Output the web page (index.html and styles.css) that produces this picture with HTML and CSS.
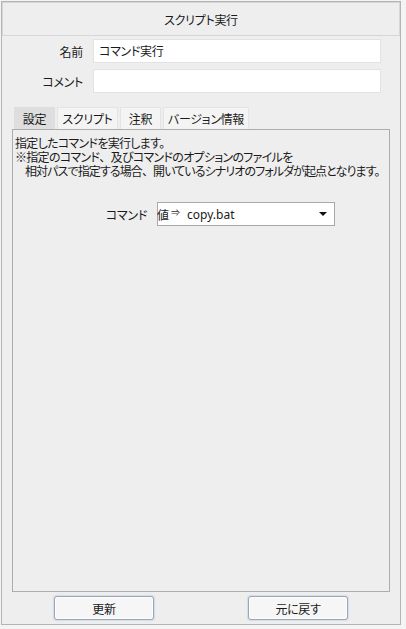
FILE: index.html
```html
<!DOCTYPE html>
<html lang="ja">
<head>
<meta charset="utf-8">
<title>スクリプト実行</title>
<link rel="stylesheet" href="styles.css">
</head>
<body>
<div class="window">
  <div class="header">スクリプト実行</div>
  <div class="form">
    <label class="form-label">名前</label>
    <div class="input">コマンド実行</div>
    <label class="form-label">コメント</label>
    <div class="input"></div>
  </div>
  <div class="tabs">
    <div class="tab tab-active">設定</div>
    <div class="tab">スクリプト</div>
    <div class="tab">注釈</div>
    <div class="tab">バージョン情報</div>
  </div>
  <div class="panel">
    <div class="desc">
      <div class="line">指定したコマンドを実行します。</div>
      <div class="line">※指定のコマンド<span class="comma">、</span>及びコマンドのオプションのファイルを</div>
      <div class="line indent tight">相対パスで指定する場合<span class="comma">、</span>開いているシナリオのフォルダが起点となります。</div>
    </div>
    <div class="combo-row">
      <span class="combo-label">コマンド</span>
      <div class="combo">
        <span class="combo-prefix">値<span class="arrow-glyph">⇒</span></span>
        <span class="combo-value">copy.bat</span>
        <span class="combo-arrow"></span>
      </div>
    </div>
  </div>
  <div class="buttons">
    <button class="btn">更新</button>
    <button class="btn">元に戻す</button>
  </div>
</div>
</body>
</html>
```
FILE: styles.css
```css
html, body {
  margin: 0;
  padding: 0;
  background: #f4f4f4;
}
body {
  font-family: "Noto Sans CJK JP", "Noto Sans", sans-serif;
  font-size: 12px;
  color: #1a1a1a;
  font-feature-settings: "palt";
}
.window {
  box-sizing: border-box;
  margin: 1px 0 0 1px;
  width: 400px;
  height: 624px;
  border: 1px solid #b4b4b4;
  background: #eeeeee;
  display: flex;
  flex-direction: column;
}
.header {
  box-sizing: border-box;
  height: 34px;
  border: 1px solid #d6d6d6;
  display: flex;
  align-items: center;
  justify-content: center;
  padding-top: 1px;
  letter-spacing: -0.3px;
}
.form {
  margin-top: 3px;
  display: grid;
  grid-template-columns: 81px 288px;
  column-gap: 10px;
  row-gap: 6px;
  align-items: center;
}
.form-label {
  text-align: right;
  letter-spacing: -0.3px;
}
.input {
  box-sizing: border-box;
  height: 24px;
  background: #ffffff;
  border: 1px solid #e2e2e2;
  padding: 0 5px;
  line-height: 21px;
  letter-spacing: -0.3px;
}
.tabs {
  margin-top: 14px;
  height: 22px;
  display: flex;
  gap: 2px;
  padding-left: 12px;
}
.tab {
  box-sizing: border-box;
  height: 22px;
  display: flex;
  align-items: center;
  justify-content: center;
  background: #f4f4f4;
  border: 1px solid #e4e4e4;
  border-bottom: none;
  letter-spacing: -0.3px;
}
.tab:nth-child(1) { width: 41px; }
.tab:nth-child(2) { width: 61px; }
.tab:nth-child(3) { width: 41px; }
.tab:nth-child(4) { width: 86px; }
.tab-active {
  background: #dedede;
  border-color: #dedede;
}
.panel {
  box-sizing: border-box;
  margin-left: 10px;
  width: 378px;
  height: 463px;
  border: 1px solid #adadad;
  background: #eeeeee;
}
.desc {
  padding: 6px 0 0 2px;
  white-space: nowrap;
  letter-spacing: -0.7px;
}
.line {
  height: 14px;
  line-height: 14px;
}
.tight {
  letter-spacing: -0.9px;
}
.comma {
  font-feature-settings: normal;
}
.indent {
  padding-left: 10px;
}
.combo-row {
  margin-top: 24px;
  display: grid;
  grid-template-columns: 134px 178px;
  column-gap: 10px;
  align-items: center;
}
.combo-label {
  text-align: right;
  letter-spacing: -0.3px;
}
.combo {
  box-sizing: border-box;
  height: 24px;
  background: #ffffff;
  border: 1px solid #a9a9a9;
  display: flex;
  align-items: center;
  position: relative;
}
.combo-prefix {
  width: 30px;
  margin-left: -1px;
  display: flex;
  align-items: center;
}
.arrow-glyph {
  font-size: 9px;
  margin-left: 2px;
  color: #333;
  position: relative;
  top: -2px;
}
.combo-value {
  font-family: "Noto Sans", "Open Sans", sans-serif;
  font-size: 12px;
}
.combo-arrow {
  position: absolute;
  right: 7px;
  top: 9px;
  width: 0;
  height: 0;
  border-left: 4px solid transparent;
  border-right: 4px solid transparent;
  border-top: 4px solid #111;
}
.buttons {
  margin-top: 4px;
  display: flex;
  gap: 94px;
  padding-left: 52px;
}
.btn {
  box-sizing: border-box;
  width: 100px;
  height: 24px;
  font-family: inherit;
  font-size: 12px;
  color: #1a1a1a;
  background: #f6f6f6;
  border: 1px solid #9ea6b2;
  border-radius: 3px;
  box-shadow: inset 0 0 0 1px #fdfdfd, 0 0 1px 1px rgba(170, 200, 235, 0.45);
  padding: 0;
  font-feature-settings: "palt";
  letter-spacing: -0.3px;
}
```
